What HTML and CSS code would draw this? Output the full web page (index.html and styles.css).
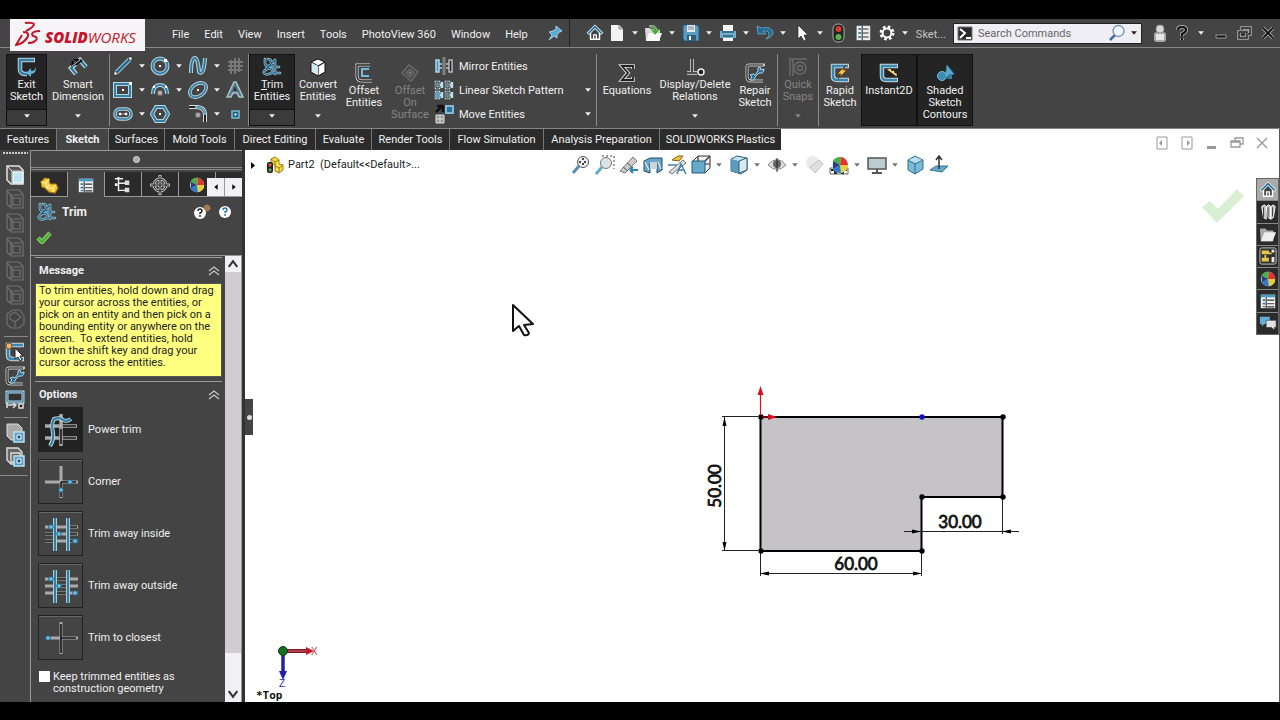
FILE: index.html
```html
<!DOCTYPE html>
<html lang="en">
<head>
<meta charset="utf-8">
<title>SOLIDWORKS - Part2</title>
<link rel="stylesheet" href="styles.css">
</head>
<body>
<svg class="sprite" aria-hidden="true">
  <symbol id="down" viewBox="0 0 7 7"><path d="M1 2h5L3.500 5z" fill="currentColor"/></symbol>
  <symbol id="house" viewBox="0 0 20 20"><path d="M5 9v8h10V9l-5-5z" fill="#444" stroke="#fff" stroke-width="1.600"/><path d="M8.500 17v-5h3v5" fill="none" stroke="#fff" stroke-width="1.400"/><path d="M2 11l8-8 8 8" fill="none" stroke="#e8f4fa" stroke-width="3.600"/><path d="M2.500 10.500L10 3l7.500 7.500" fill="none" stroke="#216e94" stroke-width="1.800"/></symbol>
  <symbol id="sheet" viewBox="0 0 20 20"><path d="M2 3h16v15H2z" fill="#f4f4f4"/><path d="M2 3h16v3H2z" fill="#4c9cc4"/><path d="M4 8h3v2H4zM4 12h3v2H4zM4 15.500h3v1.500H4z" fill="#2b7ca5"/><path d="M9 9h8M9 13h8M9 16.500h8M8 6v12" stroke="#333" stroke-width="1.200"/></symbol>
  <symbol id="sphere" viewBox="0 0 20 20"><circle cx="10" cy="10" r="8" fill="#eee"/><path d="M10 10L3 6a8 8 0 0 1 8-4z" fill="#49b248"/><path d="M10 10l1-8a8 8 0 0 1 7 8z" fill="#df3434"/><path d="M10 10h8a8 8 0 0 1-7 8z" fill="#e7cf3c"/><path d="M10 10l1 8a8 8 0 0 1-8-4z" fill="#3279c7"/><path d="M10 10l-7 4V6z" fill="#263f80"/></symbol>
  <symbol id="cubeoff" viewBox="0 0 20 20"><path d="M2 1h12l4 4v14H6l-4-4z M2 2l4 4h12 M6 6v12 M8 9h7v7H8z M8 9l-3-3M8 16l-3 2" fill="none" stroke="#707070" stroke-width="1.200"/></symbol>
  <symbol id="trim" viewBox="0 0 20 20"><g fill="none" stroke-linecap="round"><path d="M3 2v4q0 3 3 3h3V5q0-3-3-3M4 12l9-9M5 12q4-2 5 1t-3 4-5-1 3-4M13 3v14M9 16h9M10 10h7" stroke="#a9c5d3" stroke-width="2.600"/><path d="M3 2v4q0 3 3 3h3V5q0-3-3-3M4 12l9-9M5 12q4-2 5 1t-3 4-5-1 3-4M13 3v14M9 16h9M10 10h7" stroke="#1a6388" stroke-width="1.200"/></g></symbol>
  <symbol id="sketch" viewBox="0 0 20 20"><path d="M19 3H3v10q0 4 4 4h12" fill="none" stroke="#cbd3d6" stroke-width="4.500"/><path d="M18 3H3v10q0 4 4 4h11" fill="none" stroke="#3888b2" stroke-width="2.500"/></symbol>
  <symbol id="wrench" viewBox="0 0 20 20"><path d="M19 3V2H4Q2 2 2 4v10q0 4 4 4h12" fill="none" stroke="#c9c9c9" stroke-width="3"/><path d="M18 2H4Q2 2 2 4v10q0 4 4 4h12" fill="none" stroke="#222" stroke-width="1.200"/><path d="M15 4l1 3 3-1q0 5-5 4l-4 4q0 4-5 3l2-3-2-2q4-2 5 0l3-4q-1-4 2-4z" fill="#286f98" stroke="#b6d8e8"/></symbol>
  <symbol id="part" viewBox="0 0 20 20"><path d="M2 7l4-4 4 1 1 5 6 0 2 4-3 5-6-1-4-4-3-1z" fill="#f2cb3b" stroke="#ad7e0c" stroke-width="1.200"/><path d="M2 7l5 1 3-4M7 8l1 5 3-4M8 13l6 0 3-3M14 13l0 4" fill="none" stroke="#fff0a1" stroke-width="1.200"/></symbol>
  <symbol id="chev" viewBox="0 0 12 10"><path d="M1 5l5-4 5 4M1 9l5-4 5 4" fill="none" stroke="#c8c8c8" stroke-width="1.200"/></symbol>
  <symbol id="restore" viewBox="0 0 14 14"><path d="M5 4V2h8v6h-3M1 5h9v6H1zM1 6h9" fill="none" stroke="currentColor" stroke-width="1.300"/></symbol>
  <symbol id="close" viewBox="0 0 14 14"><path d="M2 2l10 10M12 2L2 12" stroke="currentColor" stroke-width="1.400"/></symbol>
</svg>

<div class="app">
<header class="menubar">
  <div class="brand">
    <svg width="26" height="28" viewBox="0 0 26 28" fill="none" stroke="#c4162c" stroke-width="2"><path d="M10 2q7-1 9 1 0 3-8 7M8 11q6 0 5 4-3 7-12 9l6-10"/><path d="M25 10q-7 0-8 3 0 2 4 3 2 2-1 4-2 2-7 2"/></svg>
    <span class="wordmark"><b>SOLID</b>WORKS</span>
  </div>
  <nav class="menus">
    <button>File</button><button>Edit</button><button>View</button><button>Insert</button><button>Tools</button><button>PhotoView 360</button><button>Window</button><button>Help</button>
  </nav>
  <button class="pin" aria-label="Pin menu"><svg width="16" height="16" viewBox="0 0 16 16"><path d="M9 1l6 5-2 1-1 0-2 3 0 3-3-2-5 4 3-5-3-3 4-1 3-2z" fill="#5ca9d3" stroke="#a5d2e8"/></svg></button>
  <div class="quick">
    <button class="ic home" aria-label="Home"><svg width="18" height="18"><use href="#house"/></svg></button>
    <button class="ic" aria-label="New"><svg width="16" height="18" viewBox="0 0 16 18"><path d="M2 1h8l4 4v12H2z" fill="#f3f3f3"/><path d="M10 1v4h4" fill="#bbb" stroke="#999"/></svg></button><button class="dd" aria-label="New options"><svg><use href="#down"/></svg></button>
    <button class="ic" aria-label="Open"><svg width="19" height="18" viewBox="0 0 19 18"><path d="M1 4h5l2 2h8v11H2z" fill="#d8d8d8"/><path d="M5 9h13l-3 8H2z" fill="#fafafa"/><path d="M5 2q7-2 8 4h3l-5 5-4-5h3q0-2-5-4z" fill="#4aa63d" stroke="#cdeec5" stroke-width=".6"/></svg></button><button class="dd" aria-label="Open options"><svg><use href="#down"/></svg></button>
    <button class="ic" aria-label="Save"><svg width="18" height="18" viewBox="0 0 18 18"><path d="M1 1h14l2 2v14H3l-2-2z" fill="#5d9bbd" stroke="#25597a"/><path d="M5 1h8v7H5z" fill="#e3e9ec"/><path d="M6 3h6M6 5h6" stroke="#888"/><path d="M5 11h9v6H5z" fill="#2a5e7b"/><path d="M7 12h2v4H7z" fill="#fff"/></svg></button><button class="dd" aria-label="Save options"><svg><use href="#down"/></svg></button>
    <button class="ic" aria-label="Print"><svg width="18" height="18" viewBox="0 0 18 18"><path d="M4 1h10v6H4zM4 13h10v4H4z" fill="#f5f5f5"/><path d="M1 7h16v7H1z" fill="#70aeca"/><path d="M4 12h10M3 8h12" stroke="#285e7c" stroke-width="1.500"/></svg></button><button class="dd" aria-label="Print options"><svg><use href="#down"/></svg></button>
    <button class="ic" aria-label="Undo"><svg width="18" height="18" viewBox="0 0 18 18"><path d="M1 2l1 8 8 0-3-3q5-1 6 2 1 3-3 6 7-2 7-7-2-6-11-4z" fill="#1e6e98" stroke="#7fb2cb" stroke-width=".7"/></svg></button><button class="dd" aria-label="Undo options"><svg><use href="#down"/></svg></button>
    <button class="ic" aria-label="Select"><svg width="14" height="18" viewBox="0 0 14 18"><path d="M3 1v14l3-3 3 5 2-1-2-5 4 0z" fill="#fff" stroke="#222" stroke-width=".7"/></svg></button><button class="dd" aria-label="Select options"><svg><use href="#down"/></svg></button>
    <button class="ic" aria-label="Rebuild"><svg width="14" height="20" viewBox="0 0 14 20"><rect x="1" y="1" width="11" height="18" rx="5" fill="#222" stroke="#aaa"/><circle cx="6.500" cy="6" r="3" fill="#d33d31"/><circle cx="6.500" cy="14" r="3" fill="#56b448"/></svg></button>
    <button class="ic wide" aria-label="Options list"><svg width="16" height="18" viewBox="0 0 20 20"><path d="M2 1h17v18H2z" fill="#eee"/><path d="M4 4h4v2H4zM4 9h4v2H4zM4 14h4v2H4z" fill="#226d98"/><path d="M10 5h7M10 10h7M10 15h7M9 1v18" stroke="#333" stroke-width="1.300"/></svg></button>
    <button class="ic" aria-label="Settings"><svg width="16" height="16" viewBox="0 0 16 16"><circle cx="8" cy="8" r="6" fill="none" stroke="#fff" stroke-width="3" stroke-dasharray="2.500 2.212"/><circle cx="8" cy="8" r="4.400" fill="#444" stroke="#fff" stroke-width="2"/></svg></button><button class="dd" aria-label="Settings options"><svg><use href="#down"/></svg></button>
    <span class="doctitle">Sket...</span>
  </div>
  <div class="search">
    <svg width="17" height="15" viewBox="0 0 17 15"><path d="M1 1h14v13H1z" fill="#282828" stroke="#777"/><path d="M3 3l5 4-5 5M9 12h5" stroke="#fff" stroke-width="2" fill="none"/></svg>
    <input type="text" placeholder="Search Commands" aria-label="Search Commands">
    <svg width="18" height="18" viewBox="0 0 18 18"><path d="M7 11l-5 5" stroke="#476b91" stroke-width="2.500"/><circle cx="10.500" cy="7" r="5.500" fill="#edf7ff" stroke="#748eab" stroke-width="1.300"/></svg>
    <svg width="8" height="8"><use href="#down"/></svg>
  </div>
  <div class="wincontrols">
    <button aria-label="Account"><svg width="14" height="19" viewBox="0 0 14 19"><rect x="1" y="8" width="12" height="10" rx="3" fill="#aaa"/><circle cx="7" cy="5" r="4" fill="#d8d8d8" stroke="#999"/><path d="M3 10h8v6H3z" fill="#e6e6e6"/></svg></button>
    <button aria-label="Help"><svg width="12" height="16" viewBox="0 0 12 16" fill="none"><path d="M2 5q0-3 4-3t4 3q0 2-4 4v2M6 13v2" stroke="#aaa" stroke-width="4"/><path d="M2 5q0-3 4-3t4 3q0 2-4 4v2M6 13v2" stroke="#111" stroke-width="2.200"/></svg></button>
    <button class="dd" aria-label="Help options"><svg><use href="#down"/></svg></button>
    <button aria-label="Minimize"><svg width="14" height="16" viewBox="0 0 14 16"><path d="M2 10h10v3H2z" fill="#111" stroke="#999"/></svg></button>
    <button aria-label="Restore"><svg width="15" height="15" viewBox="0 0 15 15" fill="none"><path d="M5 4V2h8v6h-2M2 6h8v6H2z" stroke="#aaa" stroke-width="3.500"/><path d="M5 4V2h8v6h-2M2 6h8v6H2zM4 8h4" stroke="#222" stroke-width="1.400"/></svg></button>
    <button aria-label="Close"><svg width="14" height="14" viewBox="0 0 14 14"><path d="M2 2l10 10M12 2L2 12" stroke="#aaa" stroke-width="3.600"/><path d="M2 2l10 10M12 2L2 12" stroke="#111" stroke-width="1.800"/></svg></button>
  </div>
</header>

<section class="ribbon" aria-label="Sketch commands">
  <button class="cmd drop active w41"><svg class="i20" viewBox="0 0 20 20"><path d="M18 3H3v9q0 5 5 5h2" fill="none" stroke="#b8d3df" stroke-width="4.500"/><path d="M17 3H3v9q0 5 5 5h2" fill="none" stroke="#367da0" stroke-width="2.500"/><path d="M19 9q0 5-5 5v-3l-5 5 5 4v-3q6-1 5-8z" fill="#66b2d6"/></svg><span>Exit<br>Sketch</span><svg class="tri"><use href="#down"/></svg></button>
  <button class="cmd drop w62"><svg class="i20" viewBox="0 0 20 20"><path d="M8 17l-5-6 9-8 6 7" fill="none" stroke="#c9d6db" stroke-width="4.500"/><path d="M8 17l-5-6 9-8 6 7" fill="none" stroke="#267299" stroke-width="2"/><path d="M5 8l6-5M4 9l1-5M11 3l-5 0M8 8l6-5" stroke="#111" stroke-width="2.200"/><path d="M4 9l8-6" stroke="#fff" stroke-width=".8"/></svg><span>Smart<br>Dimension</span><svg class="tri"><use href="#down"/></svg></button>
  <i class="rule"></i>
  <div class="tools">
    <button aria-label="Line"><svg class="i20" viewBox="0 0 20 20"><path d="M3 17L17 3" stroke="#b7d6e4" stroke-width="4.500"/><path d="M3 17L17 3" stroke="#286d90" stroke-width="2.500"/><path d="M1 16h3v3H1zM16 1h3v3h-3z" fill="#fff" stroke="#222" stroke-width=".6"/></svg></button><button aria-label="Line options"><svg class="t"><use href="#down"/></svg></button>
    <button aria-label="Circle"><svg class="i20" viewBox="0 0 20 20"><circle cx="10" cy="10" r="7.500" fill="none" stroke="#b7d6e4" stroke-width="4"/><circle cx="10" cy="10" r="7.500" fill="none" stroke="#387e9f" stroke-width="2"/><path d="M9 9h2v2H9zM14 3h3v3h-3z" fill="#fff"/></svg></button><button aria-label="Circle options"><svg class="t"><use href="#down"/></svg></button>
    <button aria-label="Spline"><svg class="i20" viewBox="0 0 20 20"><path d="M3 17Q3 2 7 2q3 0 4 14 5 4 6-14" fill="none" stroke="#b7d6e4" stroke-width="4"/><path d="M3 17Q3 2 7 2q3 0 4 14 5 4 6-14" fill="none" stroke="#327896" stroke-width="2"/></svg></button><button aria-label="Spline options"><svg class="t"><use href="#down"/></svg></button>
    <button aria-label="Grid"><svg class="i20" viewBox="0 0 20 20"><path d="M6 4v14M10 2v16M14 2v14M3 6h15M3 10h15M3 14h14" stroke="#777" stroke-width="2"/></svg></button>
    <button aria-label="Rectangle"><svg class="i20" viewBox="0 0 20 20"><path d="M2 4h15v12H2z" fill="none" stroke="#b7d6e4" stroke-width="4"/><path d="M2 4h15v12H2z" fill="none" stroke="#387e9f" stroke-width="2"/><path d="M9 9h2v2H9zM16 2h3v3h-3z" fill="#fff"/></svg></button><button aria-label="Rectangle options"><svg class="t"><use href="#down"/></svg></button>
    <button aria-label="Arc"><svg class="i20" viewBox="0 0 20 20"><path d="M3 14q0-9 7-9t7 9" fill="none" stroke="#b7d6e4" stroke-width="4"/><path d="M3 14q0-9 7-9t7 9" fill="none" stroke="#387e9f" stroke-width="2"/><path d="M8 11h4v4H8z" fill="#c9b8b8" stroke="#888"/><path d="M3 6h2v2H3zM15 6h2v2h-2z" fill="#fff"/></svg></button><button aria-label="Arc options"><svg class="t"><use href="#down"/></svg></button>
    <button aria-label="Ellipse"><svg class="i20" viewBox="0 0 20 20"><g transform="rotate(-35 10 10)"><ellipse cx="10" cy="10" rx="9" ry="6" fill="none" stroke="#b7d6e4" stroke-width="3.600"/><ellipse cx="10" cy="10" rx="9" ry="6" fill="none" stroke="#387e9f" stroke-width="1.800"/></g><path d="M9 9h2v2H9z" fill="#fff"/></svg></button><button aria-label="Ellipse options"><svg class="t"><use href="#down"/></svg></button>
    <button aria-label="Text"><svg class="i20" viewBox="0 0 20 20"><path d="M2 17L9 2h2l7 15h-4l-2-4H8l-2 4z" fill="#577987" stroke="#a9c5cf" stroke-width="1.500"/><path d="M10 6l-2 5h4z" fill="#333"/></svg></button>
    <button aria-label="Slot"><svg class="i20" viewBox="0 0 20 20"><rect x="2" y="5" width="16" height="10" rx="5" fill="none" stroke="#b7d6e4" stroke-width="3.600"/><rect x="2" y="5" width="16" height="10" rx="5" fill="none" stroke="#387e9f" stroke-width="1.600"/><path d="M6 9h2v2H6zM12 9h2v2h-2zM8 10h4" fill="#fff" stroke="#fff" stroke-width=".5"/></svg></button><button aria-label="Slot options"><svg class="t"><use href="#down"/></svg></button>
    <button aria-label="Polygon"><svg class="i20" viewBox="0 0 20 20"><path d="M6 3h8l4 7-4 7H6l-4-7z" fill="none" stroke="#b7d6e4" stroke-width="4"/><path d="M6 3h8l4 7-4 7H6l-4-7z" fill="none" stroke="#387e9f" stroke-width="2"/><path d="M9 9h2v2H9z" fill="#fff"/></svg></button><span></span>
    <button aria-label="Fillet"><svg class="i20" viewBox="0 0 20 20"><path d="M1 3h7q9 0 9 8v7" fill="none" stroke="#ddd" stroke-width="4"/><path d="M1 3h7q9 0 9 8v7" fill="none" stroke="#222" stroke-width="2"/><path d="M7 3q10-1 10 8" fill="none" stroke="#5ea7c8" stroke-width="2"/><path d="M8 9h4v4H8z" fill="#baa" stroke="#888"/></svg></button><button aria-label="Fillet options"><svg class="t"><use href="#down"/></svg></button>
    <button aria-label="Point"><svg class="i20" viewBox="0 0 20 20"><path d="M7 7h7v7H7z" fill="#1f6288" stroke="#79b6d2" stroke-width="1.600"/><path d="M9.500 9.500h2v2h-2z" fill="#fff"/></svg></button>
  </div>
  <i class="rule"></i>
  <button class="cmd drop active w46"><svg class="i20"><use href="#trim"/></svg><span><u>T</u>rim<br>Entities</span><svg class="tri"><use href="#down"/></svg></button>
  <button class="cmd drop w46"><svg class="i20" viewBox="0 0 20 20"><path d="M3 5l7-3 7 3v10l-7 4-7-4z" fill="#fff" stroke="#111"/><path d="M3 5l7 4 7-4M10 9v10" fill="none" stroke="#222" stroke-width="1.300"/><path d="M4 6l6 3v9l-6-4z" fill="#d1e8f3"/></svg><span>Convert<br>Entities</span><svg class="tri"><use href="#down"/></svg></button>
  <button class="cmd w46"><svg class="i20" viewBox="0 0 20 20"><path d="M16 2H3v11q0 5 5 5h10" fill="none" stroke="#ddd" stroke-width="3"/><path d="M16 2H3v11q0 5 5 5h10" fill="none" stroke="#222" stroke-width="1.400"/><path d="M15 6H8v7h7" fill="none" stroke="#75b9db" stroke-width="2"/></svg><span>Offset<br>Entities</span></button>
  <button class="cmd w46" disabled><svg class="i20" viewBox="0 0 20 20"><path d="M2 10l7-8 9 7-7 9zM6 10l4-4 4 4-4 4z" fill="none" stroke="#6a6a6a" stroke-width="1.500"/><path d="M8 10l2-2 2 2-2 2z" fill="#777"/></svg><span>Offset<br>On<br>Surface</span></button>
  <div class="rows">
    <button><svg class="i20" viewBox="0 0 20 20"><path d="M2 4h3v12H2zM5 8h3M5 12h3" fill="#4d91b3" stroke="#a9d7eb" stroke-width="1.500"/><path d="M10 1v18" stroke="#ccc" stroke-width="2.500"/><path d="M10 1v18" stroke="#333"/><path d="M15 4h3v12h-3zM12 8h3M12 12h3" fill="#222" stroke="#bbb" stroke-width="1.500"/></svg><span>Mirror Entities</span></button>
    <button><svg class="i20" viewBox="0 0 20 20" fill="none"><path d="M2 2h3v6H2zM5 5h4M8 2v6M12 2h3v6h-3zM15 5h3M18 2v6M2 12h3v6H2zM5 15h4M8 12v6M12 12h3v6h-3zM15 15h3M18 12v6" stroke="#bbdceb" stroke-width="2.400"/><path d="M2 2h3v6H2zM12 2h3v6h-3zM12 12h3v6h-3z" stroke="#222"/><path d="M2 12h3v6H2z" stroke="#1d7199"/></svg><span>Linear Sketch Pattern</span><svg class="t"><use href="#down"/></svg></button>
    <button><svg class="i20" viewBox="0 0 20 20"><path d="M2 8l6-6M3 2h6v6" fill="none" stroke="#111" stroke-width="2.500"/><path d="M2 11h8v8H2zM2 15h8M6 11v8" fill="#999" stroke="#ddd"/><path d="M12 2h7v7h-7z" fill="#2b7199" stroke="#83bad5" stroke-width="2"/></svg><span>Move Entities</span><svg class="t"><use href="#down"/></svg></button>
  </div>
  <i class="rule"></i>
  <button class="cmd w60"><svg class="i20" viewBox="0 0 20 20" fill="none"><path d="M16 6V3H5l6 7-6 7h11v-3" stroke="#ddd" stroke-width="3.600"/><path d="M16 6V3H5l6 7-6 7h11v-3" stroke="#222" stroke-width="1.800"/></svg><span>Equations</span></button>
  <button class="cmd drop w76"><svg class="i20" viewBox="0 0 20 20" fill="none"><path d="M7 2v13M2 16h10" stroke="#ddd" stroke-width="3.500"/><path d="M7 2v13M2 16h10" stroke="#222" stroke-width="1.600"/><circle cx="16" cy="15" r="3" fill="#222" stroke="#eee" stroke-width="1.500"/></svg><span>Display/Delete<br>Relations</span><svg class="tri"><use href="#down"/></svg></button>
  <button class="cmd w44"><svg class="i20"><use href="#wrench"/></svg><span>Repair<br>Sketch</span></button>
  <i class="rule"></i>
  <button class="cmd drop w40" disabled><svg class="i20" viewBox="0 0 20 20" fill="none" stroke="#6a6a6a" stroke-width="1.500"><path d="M1 2h18M2 2v17M5 2v17"/><circle cx="12" cy="11" r="6"/><circle cx="12" cy="11" r="2.500"/></svg><span>Quick<br>Snaps</span><svg class="tri"><use href="#down"/></svg></button>
  <i class="rule"></i>
  <button class="cmd w42"><svg class="i20" viewBox="0 0 20 20"><use href="#sketch"/><path d="M16 2l-9 9 4 0-3 5 9-9-4 0z" fill="#f5c744" stroke="#6b3d1e"/></svg><span>Rapid<br>Sketch</span></button>
  <button class="cmd active w56"><svg class="i20" viewBox="0 0 20 20"><use href="#sketch"/><path d="M7 6l11 8V10l-2 0-1-3-2 1-2-3-2 1z" fill="#ffe58a" stroke="#222" stroke-width=".7"/></svg><span>Instant2D</span></button>
  <button class="cmd active w56"><svg class="i20" viewBox="0 0 20 20"><path d="M12 2l7 9-9 3z" fill="#5aa8cf" stroke="#357d9f"/><circle cx="7" cy="13" r="4.500" fill="#3b8bb3" stroke="#79b9d8"/><path d="M14 11h3v5h-5z" fill="#377e9f"/></svg><span>Shaded<br>Sketch<br>Contours</span></button>
</section>

<div class="tabrow">
  <nav class="tabs">
    <button>Features</button><button class="on">Sketch</button><button>Surfaces</button><button>Mold Tools</button><button>Direct Editing</button><button>Evaluate</button><button>Render Tools</button><button>Flow Simulation</button><button>Analysis Preparation</button><button>SOLIDWORKS Plastics</button>
  </nav>
  <div class="doccontrols">
    <button aria-label="Dock left"><svg viewBox="0 0 14 14"><path d="M2 1h10v12H2z" fill="none" stroke="currentColor"/><path d="M7 4v6L4 7z" fill="currentColor"/></svg></button>
    <button aria-label="Dock right"><svg viewBox="0 0 14 14"><path d="M2 1h10v12H2z" fill="none" stroke="currentColor"/><path d="M7 4v6l3-3z" fill="currentColor"/></svg></button>
    <button aria-label="Minimize document"><svg viewBox="0 0 14 14"><path d="M2 10h9v3H2z" fill="currentColor"/></svg></button>
    <button aria-label="Restore document"><svg><use href="#restore"/></svg></button>
    <button aria-label="Close document"><svg><use href="#close"/></svg></button>
  </div>
</div>

<main class="work">
  <aside class="rail">
    <i class="grip"></i>
    <button aria-label="Front view"><svg viewBox="0 0 20 20"><path d="M2 1h12l4 4v14H6l-4-4z" fill="#555" stroke="#e2e2e2" stroke-width="1.500"/><path d="M2 1l5 5h11M7 6v12" stroke="#ddd" fill="none"/><path d="M8 7h10v11H8z" fill="#bfe4f4" stroke="#fff"/></svg></button>
    <button aria-label="Back view"><svg><use href="#cubeoff"/></svg></button>
    <button aria-label="Left view"><svg><use href="#cubeoff"/></svg></button>
    <button aria-label="Right view"><svg><use href="#cubeoff"/></svg></button>
    <button aria-label="Top view"><svg><use href="#cubeoff"/></svg></button>
    <button aria-label="Bottom view"><svg><use href="#cubeoff"/></svg></button>
    <button aria-label="Isometric view"><svg viewBox="0 0 20 20" fill="none" stroke="#707070" stroke-width="1.200"><path d="M2 5l6-4h7l4 6v8l-5 4H6l-4-4zM5 6l5-3 6 5-6 5-5-3zM10 13v5"/></svg></button>
    <i class="split"></i>
    <button aria-label="Sketch"><svg viewBox="0 0 20 20"><use href="#sketch"/><circle cx="4" cy="4" r="3" fill="#f0b36a" stroke="#735027"/><path d="M10 6v11l3-2 2 4 2-1-2-4h3z" fill="#fff" stroke="#222"/></svg></button>
    <button aria-label="Repair"><svg><use href="#wrench"/></svg></button>
    <button aria-label="Display"><svg viewBox="0 0 20 20"><path d="M2 2h16v10H2z" fill="#333" stroke="#b8d5e1" stroke-width="3"/><path d="M2 2h16v10H2z" fill="none" stroke="#2875a0"/><path d="M2 15h9M8 13l3 2-3 3M2 12v6M14 14h4v4h-4z" stroke="#ddd" fill="#222" stroke-width="1.500"/></svg></button>
    <i class="split"></i>
    <button aria-label="Copy body"><svg viewBox="0 0 20 20"><path d="M2 1h11l4 4v12H6l-4-4z" fill="#a9a9a9" stroke="#ddd"/><path d="M9 9h10v10H9z" fill="#5b9dbf" stroke="#b6e1f2" stroke-width="1.500"/><path d="M12 12h4v4h-4z" fill="#185b80" stroke="#fff"/></svg></button>
    <button aria-label="Copy face"><svg viewBox="0 0 20 20"><path d="M2 1h11l4 4v12H6l-4-4zM6 6h9v9H6z" fill="#666" stroke="#ddd" stroke-width="1.400"/><path d="M9 9h10v10H9z" fill="#5b9dbf" stroke="#b6e1f2" stroke-width="1.500"/><path d="M12 12h4v4h-4z" fill="#185b80" stroke="#fff"/></svg></button>
    <i class="split end"></i>
  </aside>

  <aside class="panel">
    <div class="handle"><i></i></div>
    <div class="ptabs">
      <button aria-label="Feature tree"><svg class="i20"><use href="#part"/></svg></button>
      <button class="on" aria-label="Properties"><svg class="i18"><use href="#sheet"/></svg></button>
      <button aria-label="Configurations"><svg class="i18" viewBox="0 0 20 20"><path d="M5 1v16M1 3h9M5 8h8M5 16h8" stroke="#eee" stroke-width="1.600"/><path d="M12 5h5v5h-5zM12 13h5v5h-5z" fill="#ddd"/><path d="M4 1h2v2H4zM1 8h3v3H1z" fill="#eee"/></svg></button>
      <button aria-label="Dimensions"><svg class="i20" viewBox="0 0 20 20" fill="none"><circle cx="10" cy="10" r="6" stroke="#bbb" stroke-width="3"/><path d="M10 0v20M0 10h20" stroke="#bbb" stroke-width="3"/><circle cx="10" cy="10" r="6" stroke="#222"/><path d="M10 1v18M1 10h18" stroke="#222"/></svg></button>
      <button aria-label="Appearances"><svg class="i18"><use href="#sphere"/></svg></button>
      <span class="arrows"><button aria-label="Previous tabs"><svg viewBox="0 0 7 7"><path d="M5 1v5L2 3.500z"/></svg></button><button aria-label="Next tabs"><svg viewBox="0 0 7 7"><path d="M2 1v5l3-2.500z"/></svg></button></span>
    </div>
    <header class="phead">
      <svg class="i20"><use href="#trim"/></svg><h1>Trim</h1>
      <button aria-label="What's new"><svg width="18" height="16" viewBox="0 0 18 16"><circle cx="7" cy="9" r="6" fill="#fff"/><path d="M5 7q0-2 2-2t2 2q0 1-2 2v1M7 11v2" fill="none" stroke="#222" stroke-width="1.500"/><circle cx="14" cy="4" r="3" fill="#9b7951" stroke="#dda06d" stroke-dasharray="1 1"/></svg></button>
      <button aria-label="Help"><svg width="14" height="14" viewBox="0 0 14 14"><circle cx="7" cy="7" r="6" fill="#fff"/><path d="M5 5q0-2 2-2t2 2q0 1-2 2v1M7 9v2" fill="none" stroke="#2775a7" stroke-width="1.500"/></svg></button>
    </header>
    <button class="ok" aria-label="OK"><svg width="16" height="14" viewBox="0 0 16 14"><path d="M2 8l4 4 8-9" fill="none" stroke="#a4dd7c" stroke-width="4.400"/><path d="M2 8l4 4 8-9" fill="none" stroke="#4bb137" stroke-width="2.800"/></svg></button>
    <div class="pscroll">
      <div class="pbody">
        <section class="message">
          <h2>Message <svg><use href="#chev"/></svg></h2>
          <p>To trim entities, hold down and drag<br>your cursor across the entities, or<br>pick on an entity and then pick on a<br>bounding entity or anywhere on the<br>screen.&nbsp; To extend entities, hold<br>down the shift key and drag your<br>cursor across the entities.</p>
        </section>
        <section class="options">
          <h2>Options <svg><use href="#chev"/></svg></h2>
          <button class="opt on"><span class="box"><svg viewBox="0 0 34 34" fill="none"><path d="M17 1v32M1 13h16M17 13h16M1 25h16M17 25h16" stroke="#aaa" stroke-width="3.500"/><path d="M17 16v15M19 13h13M19 25h13" stroke="#161616" stroke-width="1.600"/><path d="M6 33q4-6 3-13-2-10 1-14 6-2 9 1 4 2 8-1" stroke="#c9dbe2" stroke-width="4"/><path d="M6 33q4-6 3-13-2-10 1-14 6-2 9 1 4 2 8-1" stroke="#347e9f" stroke-width="2.200"/></svg></span>Power trim</button>
          <button class="opt"><span class="box"><svg viewBox="0 0 34 34" fill="none"><path d="M17 1v32M1 17h33" stroke="#aaa" stroke-width="3"/><path d="M17 17v15M17 17h15" stroke="#161616" stroke-width="1.600"/><circle cx="26" cy="17" r="2.300" fill="#74bde4" stroke="#17658e"/><circle cx="17" cy="25" r="2.300" fill="#74bde4" stroke="#17658e"/></svg></span>Corner</button>
          <button class="opt"><span class="box"><svg viewBox="0 0 34 34" fill="none"><path d="M1 10h33M1 17h33M1 24h33" stroke="#aaa" stroke-width="3"/><path d="M1 17h8M1 24h8M25 10h8M25 17h8M25 24h8" stroke="#161616" stroke-width="1.600"/><path d="M11 1v33M24 1v33" stroke="#a9ccdb" stroke-width="4"/><path d="M11 1v33M24 1v33" stroke="#347e9f" stroke-width="2"/><g fill="#74bde4" stroke="#17658e"><circle cx="7" cy="10" r="2.300"/><circle cx="15" cy="17" r="2.300"/><circle cx="31" cy="24" r="2.300"/></g></svg></span>Trim away inside</button>
          <button class="opt"><span class="box"><svg viewBox="0 0 34 34" fill="none"><path d="M1 10h33M1 17h33M1 24h33" stroke="#aaa" stroke-width="3"/><path d="M13 10h10M13 17h10M13 24h10" stroke="#161616" stroke-width="1.600"/><path d="M11 1v33M24 1v33" stroke="#a9ccdb" stroke-width="4"/><path d="M11 1v33M24 1v33" stroke="#347e9f" stroke-width="2"/><g fill="#74bde4" stroke="#17658e"><circle cx="7" cy="10" r="2.300"/><circle cx="15" cy="17" r="2.300"/><circle cx="31" cy="24" r="2.300"/></g></svg></span>Trim away outside</button>
          <button class="opt"><span class="box"><svg viewBox="0 0 34 34" fill="none"><path d="M17 1v32M4 17h30" stroke="#aaa" stroke-width="3"/><path d="M17 3v29M17 17h15" stroke="#161616" stroke-width="1.600"/><circle cx="4" cy="17" r="2.300" fill="#74bde4" stroke="#17658e"/></svg></span>Trim to closest</button>
          <label class="keep"><input type="checkbox"><span>Keep trimmed entities as<br>construction geometry</span></label>
        </section>
      </div>
      <div class="bar"><svg viewBox="0 0 10 10"><path d="M2 7l3-4 3 4"/></svg><i></i><svg viewBox="0 0 10 10"><path d="M2 3l3 4 3-4"/></svg></div>
    </div>
  </aside>

  <section class="view" aria-label="Graphics area">
    <div class="viewtop">
      <div class="tree"><svg width="7" height="9" viewBox="0 0 7 9"><path d="M2 1v7l4-3.500z"/></svg><svg class="partlogo" width="18" height="18" viewBox="0 0 18 18"><path d="M5 3l4-2 4 3v4l4 1v5l-4 3-4-2V8H5z" fill="#f4df49" stroke="#9a7c12"/><path d="M5 3l4 3 4-2M9 6v4l4 2 4-3M13 12v5" fill="none" stroke="#9a7c12"/><rect x="1" y="6" width="6" height="11" rx="2" fill="#222"/><circle cx="4" cy="9" r="1.700" fill="#d75143"/><circle cx="4" cy="14" r="1.700" fill="#4ba457"/></svg><span>Part2&nbsp; (Default&lt;&lt;Default&gt;...</span></div>
      <div class="heads">
        <button aria-label="Zoom to fit"><svg viewBox="0 0 20 20"><path d="M8 11l-6 7" stroke="#568eaf" stroke-width="3"/><circle cx="12" cy="7" r="5.500" fill="#eee" stroke="#555"/><path d="M12 3v8M8 7h8" stroke="#444" stroke-width="2" stroke-dasharray="2 3"/></svg></button>
        <button aria-label="Zoom to area"><svg viewBox="0 0 20 20"><path d="M7 1h12v13" fill="none" stroke="#444" stroke-dasharray="2 2"/><path d="M7 12l-6 7" stroke="#68a8ca" stroke-width="3"/><circle cx="11" cy="8" r="5.500" fill="#d9e3e8" stroke="#777"/></svg></button>
        <button aria-label="Previous view"><svg viewBox="0 0 20 20"><path d="M1 16L14 2l4 4L6 18z" fill="#ccc" stroke="#777"/><path d="M4 12l5 4M8 8l5 4" stroke="#555"/><path d="M11 15h8M11 15l3-3M11 15l3 3" stroke="#3285b3" stroke-width="2"/></svg></button>
        <button aria-label="Section view"><svg viewBox="0 0 20 20"><path d="M1 6l6-3 12 0v12l-5 3V8H7v10l-6-2z" fill="#68a6c5" stroke="#244d62"/><path d="M7 7h7v7H7z" fill="#cdd4d8"/><path d="M2 7l4 8M15 7l3 7" stroke="#fff"/></svg></button>
        <button aria-label="Dynamic annotation"><svg viewBox="0 0 20 20"><path d="M5 5l6-4h5l-4 5z" fill="#f3c53f" stroke="#7f641d"/><path d="M2 17L16 5l3 3L5 19z" fill="#ddd" stroke="#777"/><path d="M1 10h9M10 19l4-10 5 10M12 15h5" stroke="#3f82a8" stroke-width="1.500" fill="none"/></svg></button>
        <button aria-label="View orientation"><svg viewBox="0 0 20 20"><path d="M2 6l5-5h12v12l-5 5" fill="#eee" stroke="#333"/><path d="M1 6h13v12H1z" fill="#69aacb" stroke="#1c5c7a"/><path d="M7 1v5M14 6l5-5M14 9h5" stroke="#333" stroke-width="1.200"/></svg></button><button class="v" aria-label="Orientation options"><svg><use href="#down"/></svg></button>
        <button aria-label="Display style"><svg viewBox="0 0 20 20"><path d="M2 4l6-3 10 2v12l-6 4-10-3z" fill="#c4e2ef" stroke="#345e70"/><path d="M2 4l8 2v12l-8-2z" fill="#5b9bbb"/><path d="M10 6l8-3v12l-8 3z" fill="#d8eaf2" stroke="#345e70"/></svg></button><button class="v" aria-label="Style options"><svg><use href="#down"/></svg></button>
        <button aria-label="Hide or show"><svg viewBox="0 0 20 20"><path d="M1 10q9-11 18 0-9 9-18 0z" fill="#ddd" stroke="#888"/><circle cx="10" cy="9" r="4" fill="#62666a"/><path d="M10 3v14" stroke="#222"/></svg></button><button class="v" aria-label="Hide options"><svg><use href="#down"/></svg></button>
        <button class="faded" aria-label="Edit appearance"><svg viewBox="0 0 20 20"><circle cx="8" cy="8" r="7" fill="#ddd"/><path d="M5 12l9-7 4 4-8 9z" fill="#ccc" stroke="#999"/></svg></button>
        <button aria-label="Apply scene"><svg viewBox="0 0 20 20"><path d="M1 13h18v6H1z" fill="#fff" stroke="#222" stroke-width=".7"/><path d="M2 14h3v2H2zM8 14h4v2H8zM15 14h3v2h-3zM5 16h3v3H5zM12 16h3v3h-3z" fill="#222"/><svg x="1" y="0" width="17" height="17"><use href="#sphere"/></svg></svg></button><button class="v" aria-label="Scene options"><svg><use href="#down"/></svg></button>
        <button aria-label="View settings"><svg viewBox="0 0 20 20"><path d="M1 3h18v11H1z" fill="#bccbd1" stroke="#555" stroke-width="1.500"/><path d="M10 14v4M5 18h10" stroke="#555" stroke-width="2"/></svg></button><button class="v" aria-label="View settings options"><svg><use href="#down"/></svg></button>
        <button aria-label="Isometric"><svg viewBox="0 0 20 20"><path d="M3 5l7-4 8 4v9l-8 5-7-4z" fill="#78bbdb" stroke="#376f8c"/><path d="M3 5l7 4 8-4M10 9v10" fill="none" stroke="#376f8c"/><path d="M4 5l6-3 7 3-7 3z" fill="#bbe1f1"/></svg></button>
        <button aria-label="Normal to"><svg viewBox="0 0 20 20"><path d="M1 15l6-4h12l-6 6z" fill="#66a9c9" stroke="#377797"/><path d="M10 14V2M7 5l3-4 3 4" stroke="#333" stroke-width="1.500" fill="none"/></svg></button>
      </div>
    </div>
    <svg class="confirm" viewBox="0 0 44 36"><path d="M1 19l8-6 8 8L36 1l7 7-27 27z" fill="#d8efd4"/></svg>
    <nav class="taskpane">
      <button class="on" aria-label="Home"><svg><use href="#house"/></svg></button>
      <button aria-label="Design library"><svg viewBox="0 0 20 20"><path d="M3 4l3-2 2 2v14l-3-2zM8 4l3-2 2 2v14l-3-2zM13 4l3-2 2 2-2 12-3 2z" fill="#bbb" stroke="#fff"/><path d="M5 5v11M10 5v11M15 5v10" stroke="#333"/></svg></button>
      <button aria-label="File explorer"><svg viewBox="0 0 20 20"><path d="M1 4h6l2 2h7v12H2z" fill="#aaa"/><path d="M6 8h13l-4 10H2z" fill="#eee"/></svg></button>
      <button aria-label="View palette"><svg viewBox="0 0 20 20"><rect x="1" y="1" width="18" height="18" rx="2" fill="#333" stroke="#ccc"/><path d="M3 4h8v2h3v2H3zM8 9v3h3v4H3v-4h3V9z" fill="#e9c746"/><path d="M14 11h3v6h-3zM14 3h3v3h-3z" fill="#eee"/></svg></button>
      <button aria-label="Appearances"><svg><use href="#sphere"/></svg></button>
      <button aria-label="Custom properties"><svg><use href="#sheet"/></svg></button>
      <button aria-label="Forum"><svg viewBox="0 0 20 20"><path d="M1 3h11v8H6l-3 3v-3H1z" fill="#63aed5"/><path d="M8 7h11v8h-2v3l-3-3H8z" fill="#e2e2e2" stroke="#333" stroke-width=".7"/></svg></button>
    </nav>
    <svg class="drawing" width="340" height="210" viewBox="0 0 340 210">
      <path d="M70 42h242v80h-80v54H70z" fill="#c5c3c6"/>
      <g stroke="#222" fill="none"><path d="M32 41.500h36M32 175.500h36M34.500 42v134M70.500 178v23M231.500 178v23M71 198.500h161M312.500 124v35M214 156.500h115"/></g>
      <path d="M34.500 42l2 9h-4zM34.500 176l2-9h-4zM70 198.500l9-2v4zM232 198.500l-9-2v4zM231 156.500l-9-2v4zM312 156.500l9-2v4z" fill="#000"/>
      <path d="M70.500 42h242v80h-81v54h-161z" fill="none" stroke="#000" stroke-width="2"/>
      <g fill="#000"><circle cx="71" cy="42" r="2.700"/><circle cx="313" cy="42" r="2.700"/><circle cx="313" cy="122" r="2.700"/><circle cx="232" cy="122" r="2.700"/><circle cx="232" cy="176" r="2.700"/><circle cx="71" cy="176" r="2.700"/></g>
      <circle cx="232" cy="42" r="2.700" fill="#1010c8"/>
      <path d="M70.500 40V18M72 42h10" stroke="#d51225" stroke-width="1.200"/><path d="M70.500 11l3 9h-6zM87 42l-9-3v6z" fill="#d51225"/>
      <text class="dim" x="31" y="111" text-anchor="middle" transform="rotate(-90 31 111)">50.00</text>
      <text class="dim" x="166" y="195" text-anchor="middle">60.00</text>
      <text class="dim" x="270" y="153" text-anchor="middle">30.00</text>
    </svg>
    <svg class="pointer" width="24" height="36" viewBox="0 0 24 36"><path d="M2 2v26l6-5 5 9q4 1 5-2l-5-8 9-1z" fill="#fff" stroke="#111" stroke-width="2" stroke-linejoin="round"/></svg>
    <svg class="triad" width="50" height="50" viewBox="0 0 50 50"><path d="M13 10h20" stroke="#801924" stroke-width="4"/><path d="M13 10h20" stroke="#e06a74"/><path d="M33 6l8 4-8 4z" fill="#c21b2b"/><path d="M10 13v20" stroke="#2421a5" stroke-width="3.500"/><path d="M6 30h8l-4 9z" fill="#221ea8"/><circle cx="10" cy="10" r="4.500" fill="#176b23" stroke="#074210"/><text class="axis" x="38" y="14" fill="#d2363b">X</text><text class="axis" x="6" y="46" fill="#322bb5">Z</text></svg>
    <span class="viewname">*Top</span>
    <button class="tab-handle" aria-label="Collapse panel"><i></i></button>
  </section>
</main>
</div>
</body>
</html>
```
FILE: styles.css
```css
:root { --bg: #444; --dark: #2b2b2b; --line: #858585; --ui: Roboto, "Noto Sans", sans-serif; }
* { box-sizing: border-box; }
body { margin: 0; background: #000; font-family: var(--ui); font-size: 11px; line-height: 12px; color: #f0f0f0; }
button { font: inherit; color: inherit; background: none; border: 0; padding: 0; margin: 0; }
svg { display: block; flex: none; }
h1, h2, p { margin: 0; }
.sprite { position: absolute; width: 0; height: 0; }
.app { display: flex; flex-direction: column; height: 100vh; padding: 19px 0 18px; overflow: hidden; }
.i20 { width: 20px; height: 20px; }
.i18 { width: 18px; height: 18px; }

.menubar { display: flex; align-items: center; height: 29px; flex: none; background: var(--bg); border-bottom: 1px solid var(--line); white-space: nowrap; }
.brand { display: flex; align-items: center; gap: 4px; width: 135px; height: 32px; margin-left: 10px; padding-left: 5px; align-self: flex-start; background: #f6f4f6; z-index: 1; flex: none; }
.wordmark { color: #c4162c; font-family: "Open Sans", sans-serif; font-style: italic; font-size: 15px; line-height: 20px; padding-top: 4px; }
.wordmark b { font-weight: 800; }
.menus { display: flex; gap: 15px; margin-left: 27px; padding-top: 3px; }
.pin { margin: 0 0 0 auto; }
.quick { display: flex; align-items: center; height: 100%; margin-left: 6px; padding-left: 13px; border-left: 1px solid #222; }
.quick button { display: flex; justify-content: center; align-items: center; }
.ic { width: 20px; }
.ic.home { width: 24px; }
.ic.wide { width: 28px; }
.dd { width: 17px; display: flex; justify-content: center; }
.dd svg, .t, .tri { width: 8px; height: 8px; }
.doctitle { margin: 0 7px 0 2px; padding-top: 3px; color: #c4c4c4; }
.search { display: flex; align-items: center; gap: 4px; width: 189px; height: 21px; flex: none; padding: 0 3px; background: #f0eef5; border: 1px solid #222; color: #222; }
.search input { flex: 1; min-width: 0; border: 0; padding: 2px 0 0; background: none; font: inherit; color: #555; }
.search input::placeholder { color: #666; opacity: 1; }
.wincontrols { display: flex; align-items: center; gap: 9px; margin: 0 5px 0 11px; }
.wincontrols .dd { width: 8px; }

.ribbon { display: flex; align-items: stretch; flex: none; height: 81px; padding: 6px 0 2px 6px; background: var(--bg); border-bottom: 1px solid var(--line); white-space: nowrap; }
.rule { width: 1px; flex: none; background: #8a8a8a; }
.cmd { display: flex; flex-direction: column; align-items: center; flex: none; padding-top: 9px; text-align: center; }
.cmd span { padding-top: 2px; }
.cmd.drop { padding-top: 3px; }
.cmd .tri { margin: auto 0 6px; }
.cmd.active { background: #242424; border: 1px solid #111; padding-top: 8px; }
.cmd.drop.active { padding-top: 2px; background: linear-gradient(#242424 54px, #111 54px, #111 55px, #3b3b3b 55px); }
.cmd.active .tri { margin-bottom: 5px; }
.cmd:disabled { color: #858585; }
.w40 { width: 40px; }
.w41 { width: 41px; }
.w42 { width: 42px; }
.w44 { width: 44px; }
.w46 { width: 46px; }
.w56 { width: 56px; }
.w60 { width: 60px; }
.w62 { width: 62px; }
.w76 { width: 76px; }
.tools { display: grid; grid-template-columns: 26px 11px 26px 12px 26px 11px 26px; grid-auto-rows: 24px; }
.tools button { display: flex; align-items: center; justify-content: center; }
.rows { display: grid; grid-auto-rows: 24px; width: 163px; padding-left: 1px; }
.rows button { display: flex; align-items: center; gap: 5px; }
.rows span { padding-top: 1px; }
.rows .t { margin: 0 4px 0 auto; }

.tabrow { display: flex; flex: none; justify-content: space-between; height: 21px; background: #fff; border-right: 1px solid #555; }
.tabs { display: grid; grid-template-columns: 57px 52px 56px 70px 81px 56px 78px 94px 116px 121px; background: var(--dark); white-space: nowrap; }
.tabs button { padding-top: 1px; border-right: 1px solid #777; text-align: center; }
.tabs button:last-child { border: 0; }
.tabs .on { background: var(--bg); font-weight: 700; }
.doccontrols { display: flex; align-items: flex-end; gap: 11px; padding-right: 10px; color: #999; }
.doccontrols svg { width: 14px; height: 14px; }

.work { display: flex; flex: 1; min-height: 0; background: var(--bg); }
.rail { display: flex; flex-direction: column; align-items: center; gap: 4px; width: 30px; flex: none; padding-top: 2px; }
.rail button svg { width: 20px; height: 20px; }
.grip { width: 25px; height: 2px; margin-bottom: 7px; background: repeating-linear-gradient(90deg, #ccc 0 2px, transparent 2px 3px); }
.split { align-self: stretch; height: 1px; margin: 3px 2px 1px 4px; background: #888; }
.split.end { margin: 4px 2px 0 0; }

.panel { display: flex; flex-direction: column; width: 215px; flex: none; border-left: 1px solid #999; border-right: 3px solid #333; }
.handle { display: flex; align-items: center; justify-content: center; height: 20px; flex: none; border-top: 1px solid #999; border-bottom: 3px double #888; }
.handle i { width: 7px; height: 7px; border-radius: 50%; background: #aaa; border: 1px solid #ddd; }
.ptabs { display: flex; position: relative; height: 25px; flex: none; margin-top: 2px; background: var(--dark); border-bottom: 1px solid #999; }
.ptabs > button { display: flex; align-items: center; justify-content: center; width: 37px; height: 25px; border-right: 1px solid #999; }
.ptabs > .on { background: var(--bg); }
.arrows { position: absolute; right: 0; bottom: 0; display: flex; gap: 1px; background: #999; }
.arrows button { display: flex; align-items: center; justify-content: center; width: 17px; height: 18px; background: #f1f0f3; }
.arrows svg { width: 8px; height: 8px; }
.phead { display: flex; align-items: center; height: 30px; padding: 0 10px 0 6px; }
.phead h1 { margin: 0 auto 0 5px; font-size: 12px; }
.phead button + button { margin-left: 7px; }
.ok { align-self: flex-start; margin: 3px 0 0 5px; }
.pscroll { display: flex; flex: 1; min-height: 0; margin-top: 11px; border-top: 1px solid #999; }
.pbody { flex: 1; min-width: 0; padding: 1px 3px 0 4px; }
.pbody h2 { display: flex; align-items: center; justify-content: space-between; height: 26px; padding: 0 2px 0 4px; border-top: 1px solid #999; font-size: 11px; }
.pbody h2 svg { width: 12px; height: 10px; }
.message p { height: 94px; padding: 1px 3px; background: #ffff80; border: 1px solid #555; color: #222; white-space: nowrap; }
.options { margin-top: 4px; }
.opt { display: flex; align-items: center; gap: 5px; margin: 0 0 7px 3px; }
.box { display: grid; place-items: center; width: 45px; height: 45px; border: 1px solid #222; box-shadow: inset 0 1px #666; }
.box svg { width: 34px; height: 34px; }
.opt.on .box { background: #222; box-shadow: none; }
.keep { display: flex; align-items: flex-start; gap: 3px; margin: 11px 0 0 4px; white-space: nowrap; }
.keep input { appearance: none; width: 11px; height: 11px; margin: 0; background: #fff; flex: none; }
.bar { display: flex; flex-direction: column; align-items: center; width: 17px; flex: none; background: #f1f0f2; border-right: 1px solid #999; }
.bar svg { width: 14px; height: 16px; fill: none; stroke: #333; stroke-width: 1.500; }
.bar i { width: 16px; flex: 1; background: #cfcdd0; margin-bottom: 33px; }

.view { position: relative; flex: 1; min-width: 0; background: #fff; border-right: 1px solid #555; color: #222; }
.viewtop { display: flex; align-items: center; height: 30px; padding-left: 4px; }
.tree { display: flex; align-items: center; width: 322px; white-space: nowrap; }
.partlogo { margin: 0 4px 0 10px; }
.heads { display: flex; align-items: center; gap: 4px; }
.heads button svg { width: 20px; height: 20px; }
.heads .v { width: 10px; color: #777; }
.heads .v svg { width: 8px; height: 8px; }
.faded { opacity: .6; }
.confirm { position: absolute; right: 34px; top: 38px; width: 44px; height: 36px; }
.taskpane { position: absolute; right: 0; top: 28px; width: 23px; height: 157px; display: flex; flex-direction: column; gap: 1px; background: #888; border: 1px solid #666; }
.taskpane button { display: grid; place-items: center; flex: 1; background: var(--dark); }
.taskpane .on { background: #aaa; }
.taskpane svg { width: 18px; height: 18px; }
.drawing { position: absolute; left: 445px; top: 225px; }
.dim { font-family: Lato, sans-serif; font-size: 17px; fill: #111; stroke: #111; stroke-width: .8; }
.pointer { position: absolute; left: 266px; top: 153px; }
.triad { position: absolute; left: 28px; bottom: 11px; }
.axis { font-family: "Liberation Sans", sans-serif; font-size: 10px; }
.viewname { position: absolute; left: 11px; bottom: 0; font-family: "DejaVu Sans Mono", monospace; font-weight: 700; color: #111; }
.tab-handle { position: absolute; left: 0; top: 249px; display: grid; place-items: center; width: 8px; height: 36px; background: #444; }
.tab-handle i { width: 5px; height: 5px; border-radius: 50%; background: #ddd; }
```
